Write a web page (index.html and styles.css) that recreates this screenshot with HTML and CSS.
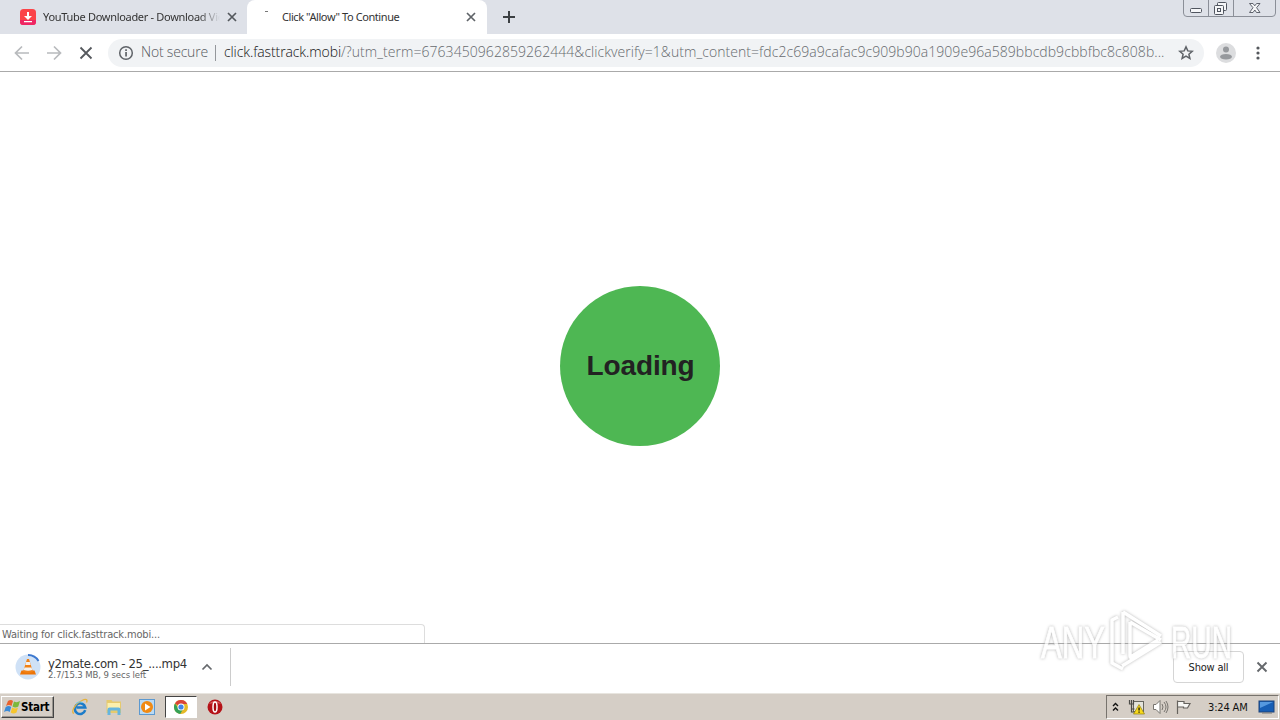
FILE: index.html
```html
<!DOCTYPE html>
<html lang="en">
<head>
    <meta charset="UTF-8">
    <meta name="viewport" content="width=device-width, initial-scale=1.0">
    <title>Click "Allow" To Continue</title>
    <link rel="stylesheet" href="styles.css">
</head>
<body>
    <div class="tabs">
        <div class="tab">
            <svg class="favicon" width="16" height="16" viewBox="0 0 16 16"><rect width="16" height="16" rx="3.5" fill="#fb4448"/><path d="M0 11h16v2q0 3-3 3H3q-3 0-3-3z" fill="#ee2563"/><path d="M7 3h2v4h3l-4 4-4-4h3zM4 12h8v1.3H4z" fill="#fff"/></svg>
            <span class="tab-title faded">YouTube Downloader - Download Vid</span>
            <svg class="close" width="10" height="10" viewBox="0 0 10 10"><path d="M1 1l8 8M9 1L1 9" stroke="#54585d" stroke-width="1.7"/></svg>
        </div>
        <div class="tab active">
            <span class="spinner"></span>
            <span class="tab-title">Click "Allow" To Continue</span>
            <svg class="close" width="10" height="10" viewBox="0 0 10 10"><path d="M1 1l8 8M9 1L1 9" stroke="#5f6368" stroke-width="1.7"/></svg>
        </div>
        <svg class="new-tab" width="12" height="12" viewBox="0 0 12 12"><path d="M6 0v12M0 6h12" stroke="#3c4043" stroke-width="2"/></svg>
        <svg class="window-buttons" width="94" height="18" viewBox="0 0 94 18">
            <path d="M.5 0v13q0 3.500 3.500 3.500h85q3.500 0 3.500-3.500V0M25.500 0v16M50.500 0v16" fill="none" stroke="#8b8f98"/>
            <g fill="#f5f6f8" stroke="#50555f">
                <rect x="7.500" y="8.500" width="11" height="4" rx="1"/>
                <rect x="34.500" y="2.500" width="9" height="8" rx="1"/>
                <rect x="31.500" y="5.500" width="9" height="9" rx="1"/>
                <rect x="34.500" y="8.500" width="3" height="3"/>
                <path d="M66.500 3.500h3.500l1.800 2.300 1.800-2.300H77l-3.400 4.200 3.400 4.800h-3.500l-1.700-2.500-1.800 2.500h-3.500l3.500-4.800z" stroke-width=".9"/>
            </g>
        </svg>
    </div>

    <div class="toolbar">
        <svg class="nav" width="108" height="28" viewBox="0 0 108 28" fill="none">
            <path d="M29 14H16M22 7.500L15.500 14l6.500 6.500M47 14h13M54 7.500l6.500 6.500-6.500 6.500" stroke="#b8babd" stroke-width="1.7"/>
            <path d="M80.500 8.500l11 11M91.500 8.500l-11 11" stroke="#55585d" stroke-width="1.8"/>
        </svg>
        <div class="address">
            <svg width="16" height="16" viewBox="0 0 16 16"><circle cx="8" cy="8" r="6.300" fill="none" stroke="#5f6368" stroke-width="1.500"/><path d="M7.200 7h1.700v4.500H7.200zM7.200 4.300h1.700v1.600H7.200z" fill="#5f6368"/></svg>
            <span class="secure">Not secure</span>
            <span class="divider"></span>
            <span class="url"><span class="host">click.fasttrack.mobi</span><span class="query">/?utm_term=6763450962859262444&amp;clickverify=1&amp;utm_content=fdc2c69a9cafac9c909b90a1909e96a589bbcdb9cbbfbc8c808b...</span></span>
            <svg class="star" width="16" height="16" viewBox="0 0 16 16"><path d="M8 1.900l1.800 4 4.400.4-3.300 2.900 1 4.300L8 11.200l-3.900 2.300 1-4.300-3.300-2.900 4.400-.4z" fill="none" stroke="#5f6368" stroke-width="1.500"/></svg>
        </div>
        <svg class="avatar" width="20" height="20" viewBox="0 0 20 20"><circle cx="10" cy="10" r="10" fill="#dcdddf"/><circle cx="10" cy="6.500" r="3" fill="#96999d"/><ellipse cx="10" cy="13.700" rx="6" ry="2.800" fill="#96999d"/></svg>
        <svg class="menu" width="4" height="16" viewBox="0 0 4 16" fill="#55585d"><circle cx="2" cy="3" r="1.600"/><circle cx="2" cy="8" r="1.600"/><circle cx="2" cy="13" r="1.600"/></svg>
    </div>

    <div class="page">
        <div class="loading">Loading</div>
        <div class="status">Waiting for click.fasttrack.mobi...</div>
    </div>

    <div class="downloads">
        <svg class="vlc" width="26" height="26" viewBox="0 0 26 26">
            <circle cx="13" cy="13" r="12.500" fill="#cfe1f6"/>
            <path d="M13 1a12 12 0 0 1 10.500 6" fill="none" stroke="#3c78cf" stroke-width="2"/>
            <path d="M6.500 16.500h13l1.500 4H5z" fill="#ed7508"/>
            <path d="M12 5h2l4 13q-5 2-10 0z" fill="#f18116"/>
            <path d="M11.200 8h3.600l.9 3h-5.400zM9.500 13.500h7l.8 2.500q-4.300 1.500-8.600 0z" fill="#f4f1ee"/>
        </svg>
        <div class="file">
            <div class="file-name">y2mate.com - 25_....mp4</div>
            <div class="file-size">2.7/15.3 MB, 9 secs left</div>
        </div>
        <svg class="chevron" width="12" height="8" viewBox="0 0 12 8"><path d="M1.500 6.500L6 2l4.500 4.500" fill="none" stroke="#65686c" stroke-width="1.700"/></svg>
        <span class="shelf-line"></span>
        <button class="show-all">Show all</button>
        <svg class="shelf-close" width="12" height="12" viewBox="0 0 12 12"><path d="M1.500 1.500l9 9M10.500 1.500l-9 9" stroke="#65686c" stroke-width="1.900"/></svg>
    </div>

    <div class="taskbar">
        <div class="start">
            <svg width="17" height="16" viewBox="0 0 17 16"><path d="M4 2q3-2 5 0L7.500 7q-2.500-2-5.500 0z" fill="#e9622d"/><path d="M10 2.500q3 1.500 6-.5l-1.700 5.500q-3 2-5.800 0z" fill="#7cb83b"/><path d="M1.700 8q3-2 5.500 0l-1.500 5q-2.500-2-5.700 0z" fill="#3b8bd7"/><path d="M8.200 8.500q3 2 5.800 0l-1.500 5q-3 2-5.800 0z" fill="#f6c52c"/></svg>
            <span>Start</span>
        </div>
        <div class="quick">
            <svg width="18" height="18" viewBox="0 0 18 18"><path d="M14.200 12.200A5.300 5.300 0 1 1 14.300 9.500H5.500" fill="none" stroke="#1c7cc9" stroke-width="2.500"/><path d="M3 15.500C-1 14 5 5 11 2.500c4-2 6-1 4.500 2" fill="none" stroke="#e5b23c" stroke-width="1.300"/><path d="M5 5.500Q8 2.500 12 4.500" fill="none" stroke="#70c8ef"/></svg>
        </div>
        <div class="quick">
            <svg width="18" height="18" viewBox="0 0 18 18"><path d="M1.500 2h5l1 1.500h8.500V15H1.500z" fill="#e6ca6e"/><path d="M2.500 5h12.500v7H2.500z" fill="#fbefad"/><path d="M2.500 17v-5.500q0-2 2-2h9q2 0 2 2V17h-3v-4.500h-7V17z" fill="#65b5df"/></svg>
        </div>
        <div class="quick">
            <svg width="18" height="18" viewBox="0 0 18 18"><rect x="1.500" y="1.500" width="15" height="15" fill="#badaf4" stroke="#5c99d0"/><circle cx="9" cy="9" r="6" fill="#f18a13"/><path d="M7 5.500l5.500 3.500L7 12.500z" fill="#fff"/></svg>
        </div>
        <div class="quick pressed">
            <svg width="16" height="16" viewBox="0 0 16 16"><circle cx="8" cy="8" r="7" fill="#e5b928"/><path d="M8 8L2 4.400A7 7 0 0 1 14.200 5H8z" fill="#da4438"/><path d="M2 4.400A7 7 0 0 0 7.200 15L10.500 9.500 5.200 9z" fill="#35a157"/><circle cx="8" cy="8" r="3.500" fill="#fff"/><circle cx="8" cy="8" r="2.600" fill="#4285e8"/></svg>
        </div>
        <div class="quick">
            <svg width="18" height="18" viewBox="0 0 18 18"><circle cx="9" cy="9" r="7.500" fill="#b51218"/><path d="M3 6a7 6 0 0 1 12 0q-6-2-12 0z" fill="#d85a5c"/><ellipse cx="9" cy="9" rx="2" ry="5" fill="#a70b10" stroke="#fff" stroke-width="1.500"/></svg>
        </div>
        <div class="tray">
            <svg class="expand" width="7" height="11" viewBox="0 0 7 11"><path d="M1 4l2.500-2.500L6 4M1 8.500l2.500-2.500L6 8.500" fill="none" stroke="#111" stroke-width="1.400"/></svg>
            <svg class="network" width="17" height="16" viewBox="0 0 17 16"><rect x="5.500" y="2.500" width="10" height="10" fill="#e4e4dc" stroke="#66665f"/><path d="M1.500 1v4h4V1M3.500 1v12h5M3.500 10h3" fill="none" stroke="#4c4c48" stroke-width="1.200"/><path d="M11 5.500l5.500 9.500h-11z" fill="#f8d91c" stroke="#8f7e13" stroke-width=".7"/><path d="M10.400 8.500h1.300v3h-1.300zM10.400 12.500h1.300v1.200h-1.300z" fill="#111"/></svg>
            <svg class="sound" width="17" height="16" viewBox="0 0 17 16"><path d="M1.500 5.500H4l4-4v13l-4-4H1.500z" fill="#fff" stroke="#77746f"/><path d="M10 5q2 3 0 6M12 3q4 5 0 10M14 2q4 6 0 12" fill="none" stroke="#77746f"/></svg>
            <svg class="flag" width="17" height="16" viewBox="0 0 17 16"><path d="M2.500 15V1.500M3 2.500h6v2h6l-2.500 4.500H8.500V8H3" fill="#f7f7f4" stroke="#66635e" stroke-width="1.200"/></svg>
            <span class="clock">3:24 AM</span>
            <svg class="desktop" width="17" height="16" viewBox="0 0 17 16"><rect x="1" y="2" width="15" height="11" fill="#175eb5" stroke="#1c427a"/><path d="M2 3h13L2 9z" fill="#5598df"/><path d="M4 14h10" stroke="#777"/></svg>
        </div>
    </div>

    <!-- svg text keeps each half of the logo at a fixed width -->
    <svg class="watermark" width="204" height="72" viewBox="0 0 204 72">
        <g class="mark-text">
            <text x="7" y="53" textLength="64" lengthAdjust="spacingAndGlyphs">ANY</text>
            <text x="137" y="53" textLength="61" lengthAdjust="spacingAndGlyphs">RUN</text>
        </g>
        <g class="mark-logo">
            <path d="M89 7l38 24M89 7v42M96 17l31 18M96 17v34M88 61l39-24M95 53l29-18M84 12l-6 3v43l11 6"/>
        </g>
    </svg>
</body>
</html>
```
FILE: styles.css
```css
* { box-sizing: border-box; }

body {
    margin: 0;
    width: 1280px;
    height: 720px;
    display: flex;
    flex-direction: column;
    overflow: hidden;
    background: #fff;
    font-family: "DejaVu Sans Condensed", "DejaVu Sans", sans-serif;
    font-size: 11px;
    color: #333;
}

svg { display: block; flex-shrink: 0; }

.tabs {
    height: 34px;
    flex-shrink: 0;
    display: flex;
    background: #dee1e8;
}

.tab {
    width: 247px;
    display: flex;
    align-items: center;
    padding-left: 20px;
    border-bottom-right-radius: 8px;
}

.tab.active {
    width: 240px;
    background: #fff;
    border-radius: 8px 8px 0 0;
    padding-left: 17px;
}

.tab-title {
    width: 177px;
    margin: 0 7px;
    padding-bottom: 2px;
    white-space: nowrap;
    font-family: "Noto Sans", sans-serif;
    font-size: 11px;
    letter-spacing: -0.3px;
}

.faded {
    -webkit-mask-image: linear-gradient(to right, #000 88%, transparent);
    mask-image: linear-gradient(to right, #000 88%, transparent);
}

.active .tab-title { margin: 0 7px 0 14px; letter-spacing: -0.42px; }

.spinner {
    width: 3px;
    height: 2px;
    margin: -11px 0 0 1px;
    border-top: 1px solid #777;
}

.new-tab { margin: 11px 0 0 16px; }
.window-buttons { margin-left: auto; margin-right: 3px; }

.toolbar {
    height: 38px;
    flex-shrink: 0;
    display: flex;
    align-items: center;
    border-bottom: 1px solid #aaa;
}

.address {
    width: 1096px;
    height: 28px;
    display: flex;
    align-items: center;
    padding-left: 10px;
    background: #f1f3f5;
    border-radius: 14px;
    font-family: "Open Sans", "Noto Sans", sans-serif;
    font-weight: 300;
    font-size: 14px;
    white-space: nowrap;
}

.secure { width: 67px; margin-left: 7px; padding-bottom: 2px; letter-spacing: -0.2px; color: #55585d; }
.divider { width: 1px; height: 16px; margin: 0 8px 0 7px; background: #94979b; }
.url { width: 942px; padding-bottom: 2px; }
.host { color: #111; letter-spacing: -0.1px; }
.query { color: #666a6e; letter-spacing: 0.055px; }
.star { margin-left: 12px; }
.avatar { margin-left: 12px; }
.menu { margin-left: 20px; }

.page {
    flex: 1;
    position: relative;
    display: flex;
    align-items: center;
    justify-content: center;
    padding-top: 17px;
}

.loading {
    width: 160px;
    height: 160px;
    display: flex;
    align-items: center;
    justify-content: center;
    padding-left: 1px;
    border-radius: 50%;
    background: #4eb753;
    color: #222;
    font: bold 28px "Liberation Sans", sans-serif;
    letter-spacing: -0.1px;
}

.status {
    position: absolute;
    left: 0;
    bottom: 0;
    width: 425px;
    height: 19px;
    padding: 0 2px;
    border: 1px solid #ddd;
    border-left: 0;
    border-bottom: 0;
    border-top-right-radius: 4px;
    font-size: 11px;
    line-height: 19px;
    letter-spacing: -0.15px;
    color: #666;
}

.downloads {
    height: 50px;
    flex-shrink: 0;
    display: flex;
    align-items: center;
    padding: 0 12px 3px 15px;
    border-top: 1px solid #aaa;
}

.file { width: 140px; margin-left: 7px; padding-top: 2px; white-space: nowrap; }
.file-name { font-size: 13px; line-height: 13px; letter-spacing: -0.35px; }
.file-size { font-size: 9.5px; line-height: 9px; color: #666; letter-spacing: -0.1px; }
.chevron { margin-left: 13px; }
.shelf-line { width: 1px; height: 38px; margin-left: 17px; background: #ccc; }

.show-all {
    width: 71px;
    height: 32px;
    margin-left: auto;
    padding: 0;
    border: 1px solid #d5d5d5;
    border-radius: 4px;
    background: #fff;
    color: #222;
    font-family: inherit;
    font-size: 11px;
    letter-spacing: -0.2px;
}

.shelf-close { margin-left: 12px; }

.taskbar {
    height: 27px;
    flex-shrink: 0;
    display: flex;
    align-items: center;
    border-top: 1px solid #e8e5df;
    background: #d5cec6;
    padding: 0 1px;
}

.start {
    width: 53px;
    height: 22px;
    display: flex;
    align-items: center;
    margin-right: 9px;
    padding-left: 2px;
    border: 1px solid;
    border-color: #fff #444 #444 #fff;
    box-shadow: inset -1px -1px #99958e;
    font-size: 11.5px;
    font-weight: bold;
    letter-spacing: -0.25px;
    color: #000;
}

.quick {
    width: 33.7px;
    height: 22px;
    display: flex;
    align-items: center;
    justify-content: center;
}

.pressed {
    width: 32px;
    margin-left: 1px;
    background: #fff;
    border: 1px solid;
    border-color: #444 #fff #fff #444;
}

.quick.pressed + .quick { width: 35px; }

.tray {
    width: 173px;
    height: 24px;
    display: flex;
    align-items: center;
    margin-left: auto;
    padding-left: 5px;
    border: 1px solid;
    border-color: #77736d #fff #fff #77736d;
}

.network { margin-left: 9px; }
.sound { margin-left: 7px; }
.flag { margin-left: 6px; }
.clock { width: 43px; margin-left: 16px; font-size: 11px; letter-spacing: -0.15px; color: #111; white-space: nowrap; }
.desktop { margin-left: 7px; }

/* logo laid over the page and the download shelf */
.watermark {
    position: absolute;
    left: 1034px;
    top: 605px;
    opacity: 0.7;
    pointer-events: none;
    filter: drop-shadow(0 0 1.5px #999);
}

.mark-text {
    fill: #fff;
    stroke: #fff;
    stroke-width: 0.8;
    font: 44px "Liberation Sans", sans-serif;
}

.mark-logo {
    fill: none;
    stroke: #fff;
    stroke-width: 3.5;
    stroke-linejoin: round;
}
```
